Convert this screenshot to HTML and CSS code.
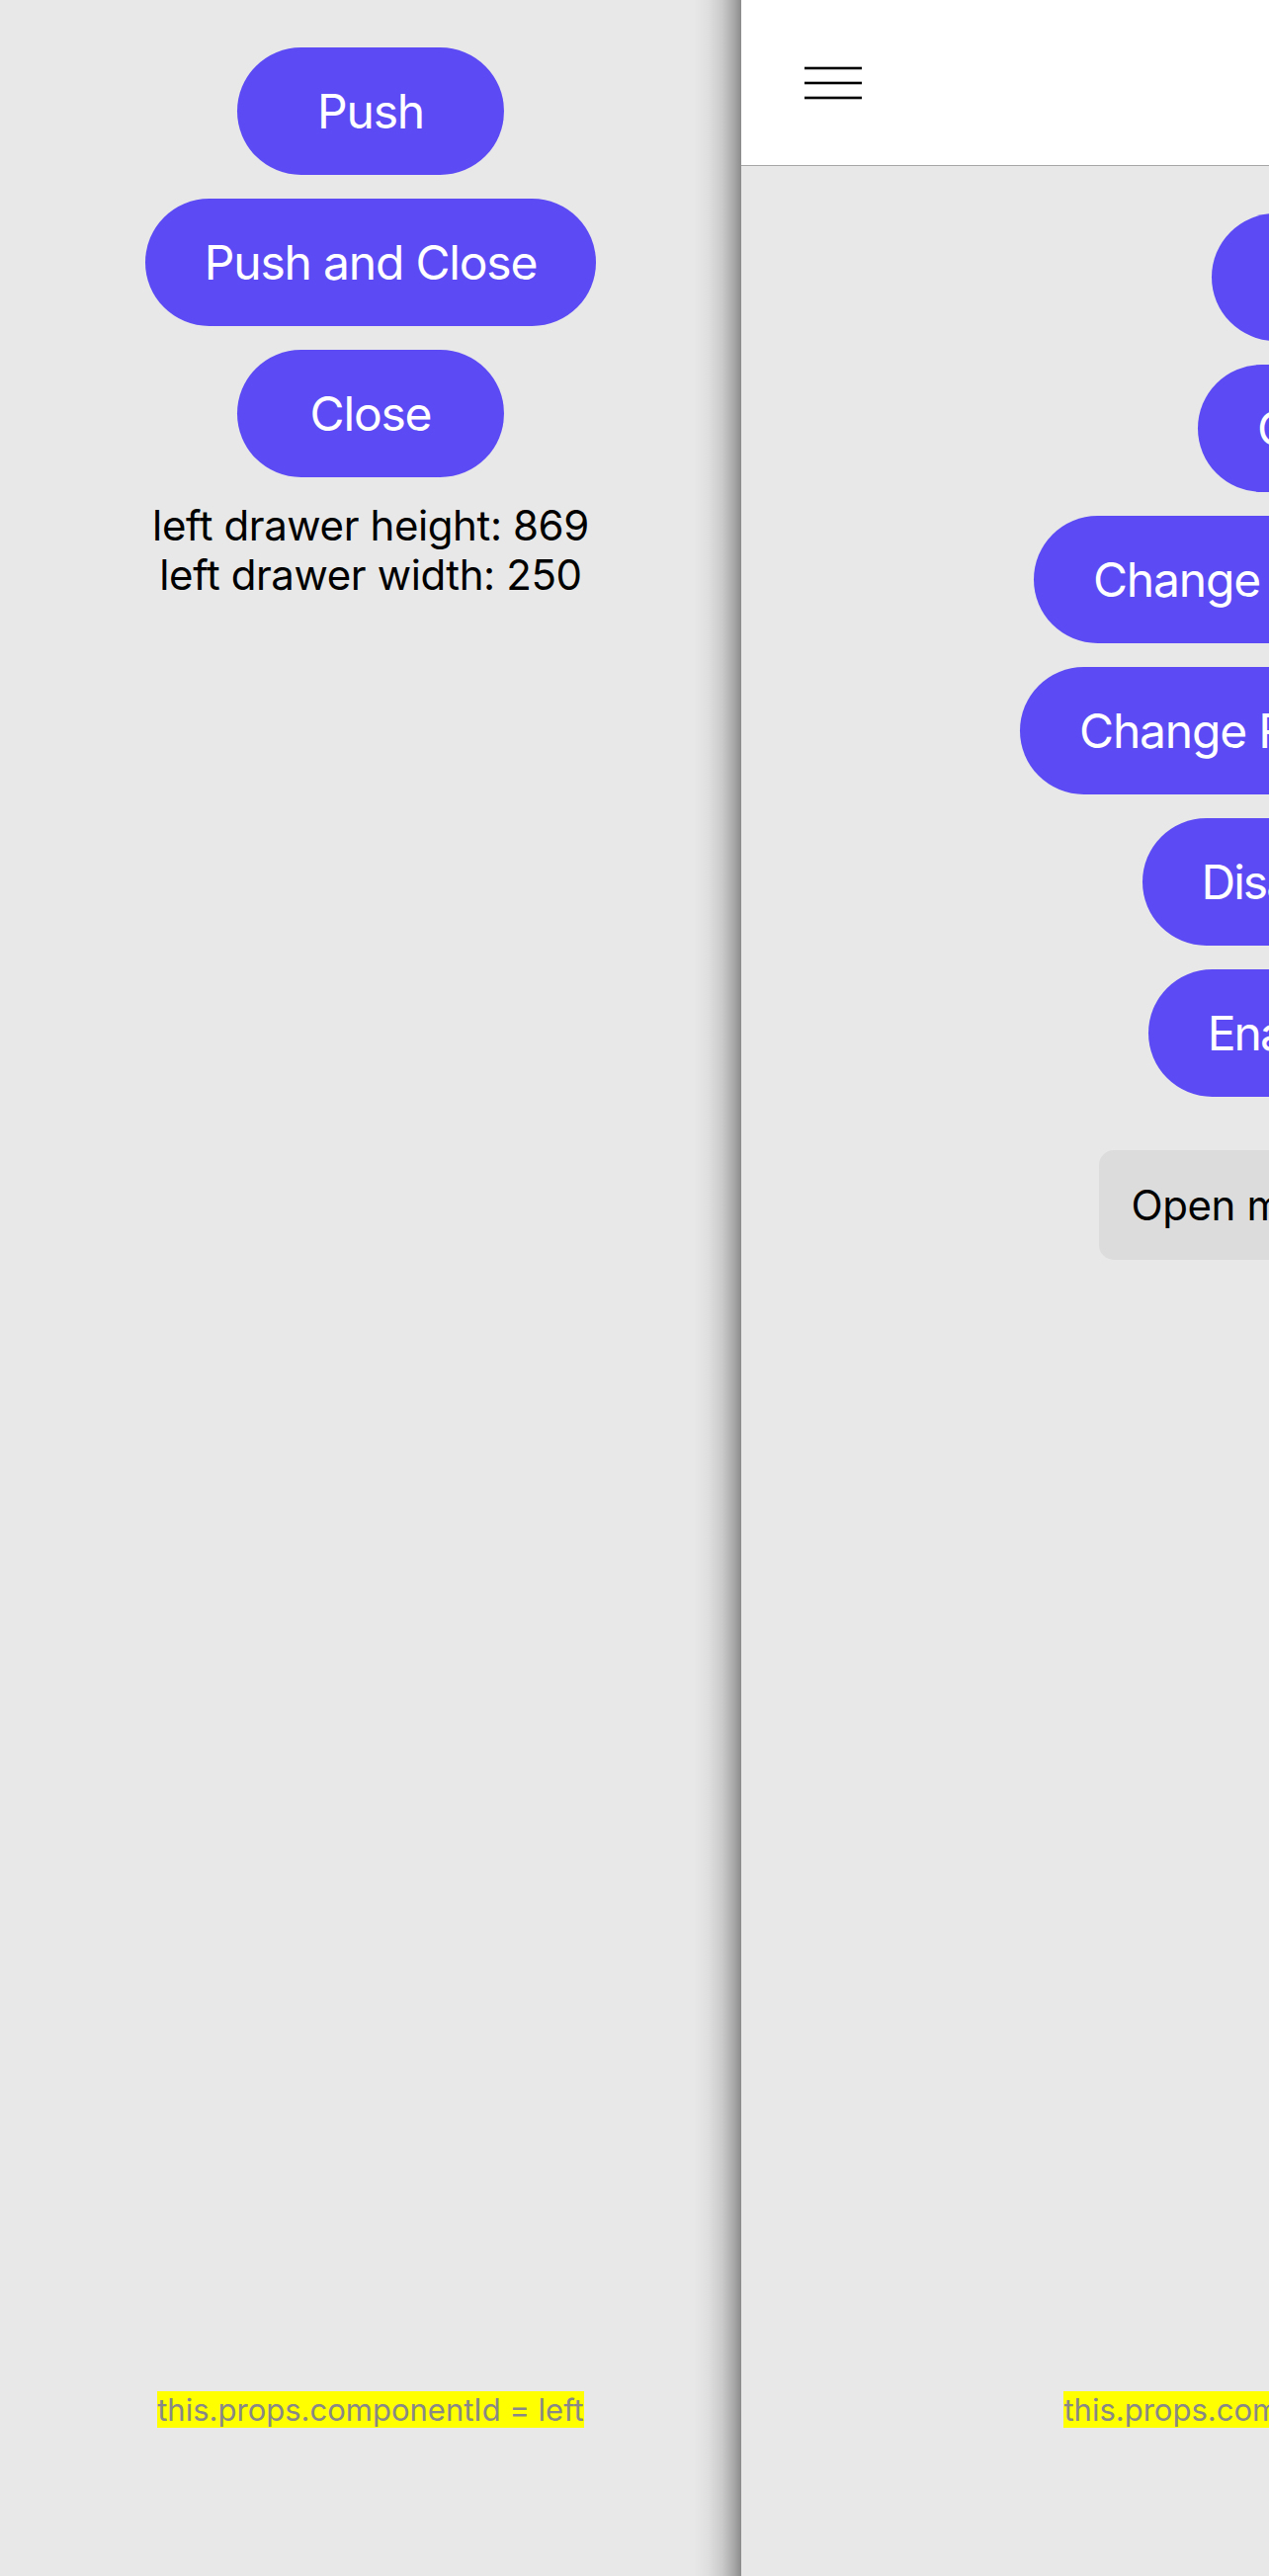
FILE: index.html
```html
<!DOCTYPE html>
<html lang="en">
<head>
<meta charset="utf-8">
<title>Side menu</title>
<link rel="stylesheet" href="styles.css">
</head>
<body>
<div class="app">
  <aside class="drawer">
    <div class="stack">
      <button class="btn">Push</button>
      <button class="btn">Push and Close</button>
      <button class="btn">Close</button>
      <p class="info">left drawer height: 869<br>left drawer width: 250</p>
    </div>
    <div class="footer"><span class="cid">this.props.componentId = left</span></div>
  </aside>
  <main class="center">
    <header class="topbar">
      <span class="menu-btn">
        <svg width="58" height="34" viewBox="0 0 58 34" aria-hidden="true">
          <rect x="0" y="0.7" width="58" height="2.6" fill="#000"/>
          <rect x="0" y="15.7" width="58" height="2.6" fill="#000"/>
          <rect x="0" y="30.7" width="58" height="2.6" fill="#000"/>
        </svg>
      </span>
    </header>
    <div class="stack">
      <button class="btn">Open Left</button>
      <button class="btn">Open Right</button>
      <button class="btn">Change Left Drawer Width</button>
      <button class="btn">Change Right Drawer Width</button>
      <button class="btn btn-narrow">Disable Gestures</button>
      <button class="btn btn-narrow">Enable Gestures</button>
      <button class="btn btn-gray">Open modal in side menu</button>
    </div>
    <div class="footer"><span class="cid">this.props.componentId = SideMenuCenter</span></div>
  </main>
</div>
</body>
</html>
```

FILE: styles.css
```css
html, body {
  margin: 0;
  padding: 0;
}

body {
  width: 1284px;
  height: 2607px;
  overflow: hidden;
  background: #e8e8e8;
  font-family: Inter, "Noto Sans", "Liberation Sans", sans-serif;
}

.app {
  display: flex;
  width: 1284px;
  height: 2607px;
  overflow: hidden;
}

.drawer {
  flex: 0 0 750px;
  display: flex;
  flex-direction: column;
  background: #e8e8e8;
  position: relative;
}

.drawer::after {
  content: "";
  position: absolute;
  top: 0;
  right: 0;
  bottom: 0;
  width: 48px;
  background: linear-gradient(to right,
    rgba(0, 0, 0, 0) 0%,
    rgba(0, 0, 0, 0.04) 30%,
    rgba(0, 0, 0, 0.13) 60%,
    rgba(0, 0, 0, 0.28) 85%,
    rgba(0, 0, 0, 0.40) 100%);
  pointer-events: none;
}

.center {
  flex: 0 0 1284px;
  display: flex;
  flex-direction: column;
  background: #e8e8e8;
}

.topbar {
  height: 167px;
  flex: none;
  background: #ffffff;
  border-bottom: 1px solid #a6a6a6;
  display: flex;
  align-items: center;
  padding-left: 64px;
}

.menu-btn {
  display: flex;
  width: 58px;
  height: 34px;
}

.stack {
  display: flex;
  flex-direction: column;
  align-items: center;
  gap: 24px;
  padding-top: 48px;
}

.btn {
  flex: none;
  height: 129px;
  min-width: 270px;
  padding: 0 60px;
  border: 0;
  border-radius: 65px;
  background: #5c4bf4;
  color: #ffffff;
  font-family: Inter, "Noto Sans", sans-serif;
  font-size: 48px;
  font-weight: 400;
  line-height: 1;
  letter-spacing: -1.2px;
  white-space: nowrap;
}

.btn-narrow {
  letter-spacing: -2px;
}

.btn-gray {
  margin-top: 30px;
  height: 111px;
  padding: 0 32px;
  border-radius: 15px;
  background: #dcdcdc;
  color: #000000;
  font-size: 42px;
  letter-spacing: -0.4px;
}

.info {
  margin: 0;
  font-size: 42px;
  line-height: 50px;
  color: #000000;
  text-align: center;
  letter-spacing: -0.4px;
}

.footer {
  margin-top: auto;
  padding-bottom: 150px;
  display: flex;
  justify-content: center;
}

.cid {
  background: #ffff00;
  color: #888888;
  font-size: 31px;
  line-height: 37px;
  white-space: nowrap;
}
```
